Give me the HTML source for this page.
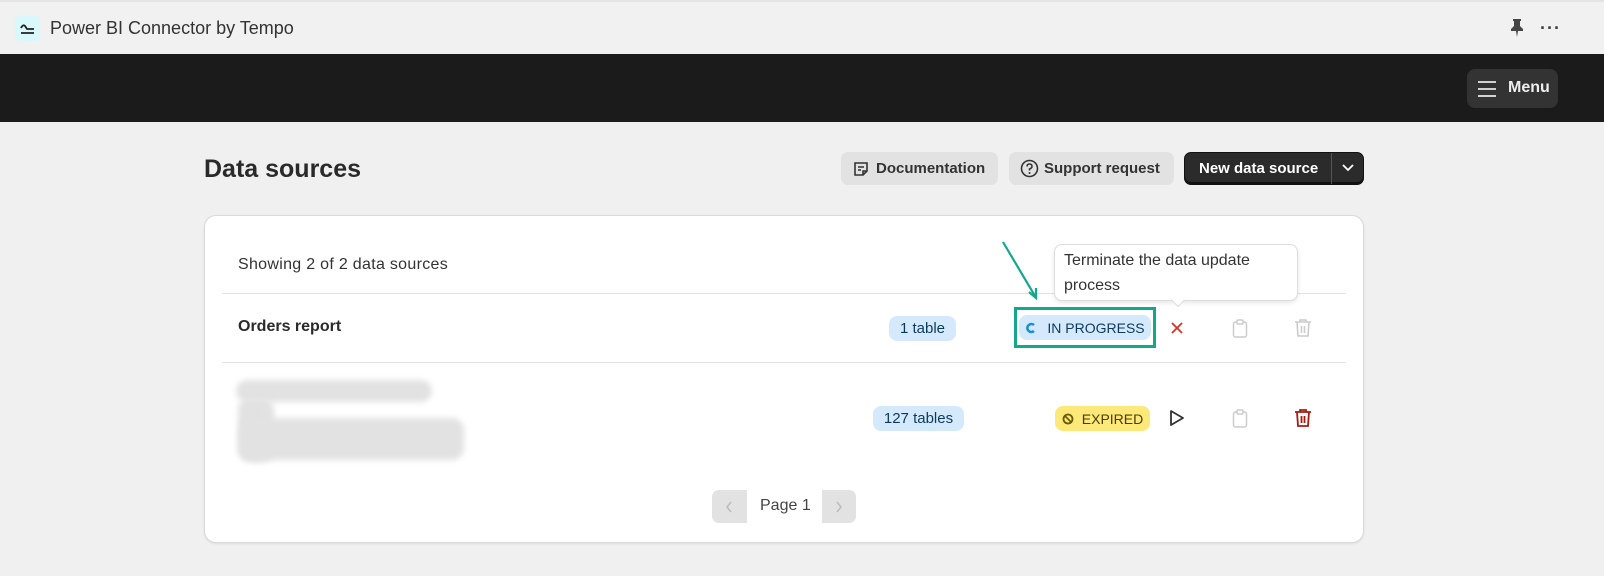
<!DOCTYPE html>
<html><head><meta charset="utf-8"><style>
*{box-sizing:border-box;margin:0;padding:0}
body{width:1604px;height:576px;background:#f0f0f0;font-family:"Liberation Sans",sans-serif;position:relative;overflow:hidden;color:#292929}
.abs{position:absolute}
.top{left:0;top:0;width:1604px;height:54px;background:#f1f1f1;border-top:2px solid #e4e4e4}
.bar{left:0;top:54px;width:1604px;height:68px;background:#1b1b1b}
.btn{position:absolute;top:152px;height:33px;border-radius:7px;background:#e2e2e2;font-size:15px;font-weight:bold;color:#333;display:flex;align-items:center}
.card{left:204px;top:215px;width:1160px;height:328px;background:#fff;border:1px solid #d9d9d9;border-radius:12px;box-shadow:0 1px 2px rgba(0,0,0,.08)}
.pill{position:absolute;height:25px;border-radius:8px;font-size:15px;display:flex;align-items:center;justify-content:center}
.blur{position:absolute;background:#e2e2e2;border-radius:12px;filter:blur(3px)}
</style></head><body>
<div class="abs top"></div>
<div class="abs" style="left:15px;top:16px;width:25px;height:25px;background:#d8f8fb;border-radius:4px"></div>
<svg class="abs" style="left:15px;top:16px" width="25" height="25"><path d="M6 12 Q8 8 10 10 L12 13 H19 M6 17 H19" stroke="#222" stroke-width="1.8" fill="none"/></svg>
<div class="abs" style="left:50px;top:18px;font-size:18px;color:#333">Power BI Connector by Tempo</div>
<svg class="abs" style="left:1508px;top:18px" width="18" height="20"><path d="M5 1 H13 V3 H12 V8 L15 11 V13 H10 L9 19 L8 13 H3 V11 L6 8 V3 H5 Z" fill="#444"/></svg>
<div class="abs" style="left:1540px;top:18px;font-size:18px;color:#444;letter-spacing:1px;font-weight:bold">···</div>
<div class="abs bar"></div>
<div class="abs" style="left:1467px;top:69px;width:91px;height:39px;background:#333;border-radius:8px"></div>
<svg class="abs" style="left:1477px;top:80px" width="20" height="18"><path d="M1 2H19M1 9H19M1 16H19" stroke="#e8e8e8" stroke-width="1.8"/></svg>
<div class="abs" style="left:1508px;top:79px;font-size:16px;color:#eee;font-weight:bold">Menu</div>
<div class="abs" style="left:204px;top:155px;font-size:25px;font-weight:bold;color:#2a2a2a">Data sources</div>
<div class="btn" style="left:841px;width:157px"><svg style="margin:0 6px 0 11px" width="18" height="18"><path d="M3 3h12v8l-4 4H3z M11 15v-4h4 M6 7h6 M6 10h3" stroke="#333" stroke-width="1.6" fill="none"/></svg>Documentation</div>
<div class="btn" style="left:1009px;width:165px"><svg style="margin:0 5px 0 11px" width="19" height="19"><circle cx="9.5" cy="9.5" r="8" stroke="#333" stroke-width="1.6" fill="none"/><path d="M7 7.5Q7 5 9.5 5T12 7.5Q12 9 9.5 10V11.5" stroke="#333" stroke-width="1.6" fill="none"/><circle cx="9.5" cy="14" r="1" fill="#333"/></svg>Support request</div>
<div class="btn" style="left:1184px;width:180px;background:#2b2b2b;color:#fff;border:1px solid #111;box-shadow:inset 0 -2px 0 #111"><span style="margin-left:14px">New data source</span><span style="position:absolute;left:146px;top:0;width:1px;height:31px;background:#555"></span><svg style="position:absolute;left:156px;top:10px" width="14" height="10"><path d="M2 2l5 5 5-5" stroke="#fff" stroke-width="1.8" fill="none"/></svg></div>
<div class="abs card"></div>
<div class="abs" style="left:238px;top:256px;font-size:16px;letter-spacing:0.3px;color:#333">Showing 2 of 2 data sources</div>
<div class="abs" style="left:222px;top:293px;width:1124px;height:1px;background:#e2e2e2"></div>
<div class="abs" style="left:222px;top:362px;width:1124px;height:1px;background:#e2e2e2"></div>
<div class="abs" style="left:238px;top:318px;font-size:16px;font-weight:bold;color:#2a2a2a">Orders report</div>
<div class="pill" style="left:889px;top:316px;width:67px;background:#d4eafc;color:#0d3a5c">1 table</div>
<div class="abs" style="left:1014px;top:307px;width:142px;height:41px;border:3px solid #13a88b"></div>
<div class="pill" style="left:1019px;top:315px;width:132px;background:#d4eafc;color:#0d3a5c;font-size:14px"><svg width="14" height="12" style="margin-right:8px"><path d="M9 3A4 4 0 1 0 9 9" stroke="#1a8fd6" stroke-width="2.6" fill="none"/></svg>IN PROGRESS</div>
<svg class="abs" style="left:1000px;top:240px" width="40" height="62"><path d="M3 2L35 56" stroke="#13a88b" stroke-width="2.2"/><path d="M29 52L36 58L36 48" stroke="#13a88b" stroke-width="2.2" fill="none"/></svg>
<div class="abs" style="left:1054px;top:244px;width:244px;height:57px;background:#fff;border:1px solid #ddd;border-radius:8px;box-shadow:0 2px 4px rgba(0,0,0,.1);font-size:16px;line-height:25px;padding:3px 9px;color:#333">Terminate the data update<br>process</div>
<div class="abs" style="left:1173px;top:295px;width:10px;height:10px;background:#fff;transform:rotate(45deg);border-right:1px solid #ddd;border-bottom:1px solid #ddd"></div>
<svg class="abs" style="left:1170px;top:321px" width="14" height="14"><path d="M2 2L12 12M12 2L2 12" stroke="#d93025" stroke-width="1.8"/></svg>
<svg class="abs" style="left:1231px;top:319px" width="18" height="19"><rect x="2.5" y="3" width="13" height="15" rx="2" stroke="#ccc" stroke-width="1.5" fill="none"/><rect x="6" y="1" width="6" height="4" rx="1" stroke="#ccc" stroke-width="1.5" fill="#fff"/></svg>
<svg class="abs" style="left:1294px;top:318px" width="18" height="20"><path d="M1 4H17M6 4V2H12V4M3 4L4 18H14L15 4M7.5 8V15M10.5 8V15" stroke="#ccc" stroke-width="1.6" fill="none"/></svg>
<div class="blur" style="left:236px;top:380px;width:196px;height:22px"></div>
<div class="blur" style="left:238px;top:398px;width:36px;height:64px"></div>
<div class="blur" style="left:240px;top:418px;width:224px;height:42px"></div>
<div class="pill" style="left:873px;top:406px;width:91px;background:#d4eafc;color:#0d3a5c">127 tables</div>
<div class="pill" style="left:1055px;top:406px;width:95px;background:#fde97a;color:#4a3c00;font-size:14px"><svg width="14" height="14" style="margin-right:6px"><circle cx="6" cy="7" r="4.5" stroke="#6b5a00" stroke-width="1.8" fill="none"/><path d="M3 4L9 10" stroke="#6b5a00" stroke-width="1.6"/></svg>EXPIRED</div>
<svg class="abs" style="left:1169px;top:409px" width="16" height="18"><path d="M2 2L14 9L2 16Z" stroke="#333" stroke-width="1.8" fill="none" stroke-linejoin="round"/></svg>
<svg class="abs" style="left:1231px;top:409px" width="18" height="19"><rect x="2.5" y="3" width="13" height="15" rx="2" stroke="#ccc" stroke-width="1.5" fill="none"/><rect x="6" y="1" width="6" height="4" rx="1" stroke="#ccc" stroke-width="1.5" fill="#fff"/></svg>
<svg class="abs" style="left:1294px;top:408px" width="18" height="20"><path d="M1 4H17M6 4V2H12V4M3 4L4 18H14L15 4M7.5 8V15M10.5 8V15" stroke="#a51d12" stroke-width="1.8" fill="none"/></svg>
<div class="abs" style="left:712px;top:490px;width:35px;height:33px;background:#e2e2e2;border-radius:7px 0 0 7px"></div>
<svg class="abs" style="left:724px;top:500px" width="10" height="14"><path d="M7 2L3 7L7 12" stroke="#bbb" stroke-width="1.5" fill="none"/></svg>
<div class="abs" style="left:760px;top:497px;font-size:16px;color:#444">Page 1</div>
<div class="abs" style="left:822px;top:490px;width:34px;height:33px;background:#e2e2e2;border-radius:0 7px 7px 0"></div>
<svg class="abs" style="left:834px;top:500px" width="10" height="14"><path d="M3 2L7 7L3 12" stroke="#bbb" stroke-width="1.5" fill="none"/></svg>
</body></html>
